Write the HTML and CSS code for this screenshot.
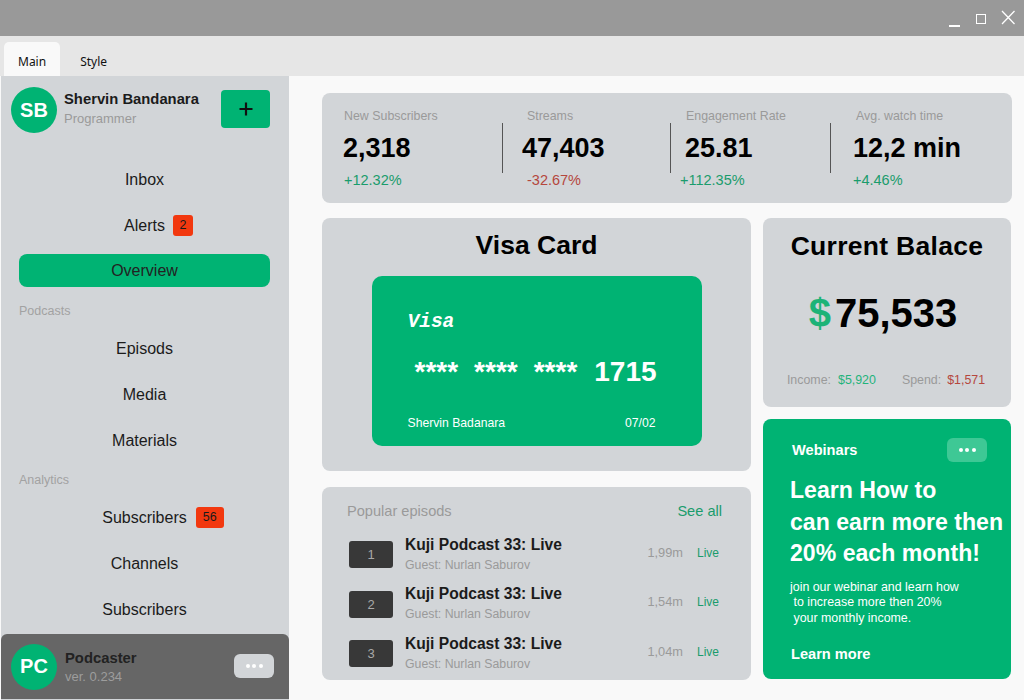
FILE: index.html
```html
<!DOCTYPE html>
<html>
<head>
<meta charset="utf-8">
<title>Podcaster</title>
<link rel="stylesheet" href="styles.css">
</head>
<body>
<div class="window">
  <div class="titlebar">
    <svg class="winctl" width="80" height="36" viewBox="0 0 80 36">
      <rect x="5" y="25" width="11" height="2" fill="#fff"/>
      <rect x="32.5" y="14.5" width="9" height="9" fill="none" stroke="#fff" stroke-width="1"/>
      <path d="M58 11 L70.5 24 M70.5 11 L58 24" stroke="#fff" stroke-width="1.3" fill="none"/>
    </svg>
  </div>
  <div class="tabs">
    <div class="tab active">Main</div>
    <div class="tab">Style</div>
  </div>
  <div class="main">
    <aside class="sidebar">
      <div class="profile">
        <div class="avatar">SB</div>
        <div class="who">
          <div class="who-name">Shervin Bandanara</div>
          <div class="who-role">Programmer</div>
        </div>
        <button class="add-btn" type="button">
          <svg width="16" height="16" viewBox="0 0 16 16"><path d="M8 1.5 V14.5 M1.5 8 H14.5" stroke="#111" stroke-width="2.2"/></svg>
        </button>
      </div>
      <nav class="nav">
        <div class="nav-item"><span class="lbl">Inbox</span></div>
        <div class="nav-item"><span class="lbl">Alerts<span class="badge">2</span></span></div>
        <div class="nav-item active"><span class="lbl">Overview</span></div>
        <div class="nav-section sec-podcasts">Podcasts</div>
        <div class="nav-item first"><span class="lbl">Episods</span></div>
        <div class="nav-item"><span class="lbl">Media</span></div>
        <div class="nav-item"><span class="lbl">Materials</span></div>
        <div class="nav-section sec-analytics">Analytics</div>
        <div class="nav-item first"><span class="lbl">Subscribers<span class="badge wide">56</span></span></div>
        <div class="nav-item"><span class="lbl">Channels</span></div>
        <div class="nav-item"><span class="lbl">Subscribers</span></div>
      </nav>
      <div class="footer">
        <div class="avatar">PC</div>
        <div class="who">
          <div class="who-name dark">Podcaster</div>
          <div class="who-role">ver. 0.234</div>
        </div>
        <button class="more-btn" type="button"><span></span><span></span><span></span></button>
      </div>
    </aside>

    <section class="content">
      <div class="stats card">
        <div class="stat s1">
          <div class="slabel">New Subscribers</div>
          <div class="sval">2,318</div>
          <div class="spct up">+12.32%</div>
        </div>
        <div class="sep"></div>
        <div class="stat s2">
          <div class="slabel">Streams</div>
          <div class="sval">47,403</div>
          <div class="spct down">-32.67%</div>
        </div>
        <div class="sep"></div>
        <div class="stat s3">
          <div class="slabel">Engagement Rate</div>
          <div class="sval">25.81</div>
          <div class="spct up">+112.35%</div>
        </div>
        <div class="sep"></div>
        <div class="stat s4">
          <div class="slabel">Avg. watch time</div>
          <div class="sval">12,2 min</div>
          <div class="spct up">+4.46%</div>
        </div>
      </div>

      <div class="grid">
        <div class="col col-left">
          <div class="card visa">
            <h2 class="panel-title">Visa Card</h2>
            <div class="cc">
              <div class="cc-brand">Visa</div>
              <div class="cc-num"><span>****</span><span>****</span><span>****</span><span class="cc-last">1715</span></div>
              <div class="cc-foot"><span>Shervin Badanara</span><span>07/02</span></div>
            </div>
          </div>

          <div class="card episodes">
            <div class="ep-head">
              <span class="ep-title">Popular episods</span>
              <span class="see-all">See all</span>
            </div>
            <div class="ep-row">
              <div class="ep-num">1</div>
              <div class="ep-text">
                <div class="ep-name">Kuji Podcast 33: Live</div>
                <div class="ep-guest">Guest: Nurlan Saburov</div>
              </div>
              <div class="ep-meta"><span class="ep-len">1,99m</span><span class="ep-live">Live</span></div>
            </div>
            <div class="ep-row">
              <div class="ep-num">2</div>
              <div class="ep-text">
                <div class="ep-name">Kuji Podcast 33: Live</div>
                <div class="ep-guest">Guest: Nurlan Saburov</div>
              </div>
              <div class="ep-meta"><span class="ep-len">1,54m</span><span class="ep-live">Live</span></div>
            </div>
            <div class="ep-row">
              <div class="ep-num">3</div>
              <div class="ep-text">
                <div class="ep-name">Kuji Podcast 33: Live</div>
                <div class="ep-guest">Guest: Nurlan Saburov</div>
              </div>
              <div class="ep-meta"><span class="ep-len">1,04m</span><span class="ep-live">Live</span></div>
            </div>
          </div>
        </div>

        <div class="col col-right">
          <div class="card balance">
            <h2 class="panel-title bal-title">Current Balace</h2>
            <div class="amount"><span class="dollar">$</span><span>75,533</span></div>
            <div class="flow">
              <span class="flow-lbl">Income:</span><span class="flow-in">$5,920</span>
              <span class="flow-lbl spend">Spend:</span><span class="flow-out">$1,571</span>
            </div>
          </div>

          <div class="webinar">
            <div class="web-head">
              <span class="web-title">Webinars</span>
              <button class="web-more" type="button"><span></span><span></span><span></span></button>
            </div>
            <div class="web-headline">Learn How to<br>can earn more then<br>20% each month!</div>
            <div class="web-body">join our webinar and learn how<br>&nbsp;to increase more then 20%<br>&nbsp;your monthly income.</div>
            <div class="web-link">Learn more</div>
          </div>
        </div>
      </div>
    </section>
  </div>
</div>
</body>
</html>
```

FILE: styles.css
```css
* { box-sizing: border-box; }

html, body {
  margin: 0;
  padding: 0;
  width: 1024px;
  height: 700px;
  overflow: hidden;
  font-family: "Liberation Sans", Arial, sans-serif;
  color: #111;
  background: #f9f9f9;
}

.window {
  display: flex;
  flex-direction: column;
  width: 1024px;
  height: 700px;
}

/* title bar */
.titlebar {
  height: 36px;
  background: #999999;
  display: flex;
  justify-content: flex-end;
  flex: none;
}

.winctl { display: block; }

/* tabs */
.tabs {
  height: 40px;
  background: #e6e6e6;
  display: flex;
  align-items: flex-end;
  gap: 6px;
  padding-left: 4px;
  flex: none;
}

.tab {
  height: 34px;
  padding: 4px 14px 0;
  display: flex;
  align-items: center;
  font-family: "Noto Sans", sans-serif;
  font-size: 12px;
  color: #111;
  border-radius: 5px 5px 0 0;
}

.tab.active { background: #f9f9f9; }

/* main */
.main {
  flex: 1;
  display: flex;
  padding-left: 1px;
  min-height: 0;
}

/* sidebar */
.sidebar {
  width: 288px;
  background: #d2d5d8;
  display: flex;
  flex-direction: column;
  flex: none;
}

.profile {
  display: flex;
  align-items: flex-start;
  padding: 11px 19px 0 10px;
  height: 81px;
}

.avatar {
  width: 46px;
  height: 46px;
  border-radius: 50%;
  background: #00b373;
  color: #fff;
  font-weight: bold;
  font-size: 20px;
  display: flex;
  align-items: center;
  justify-content: center;
  flex: none;
}

.who {
  margin-left: 7px;
  flex: 1;
  padding-top: 3px;
}

.who-name {
  font-size: 14.8px;
  font-weight: bold;
  color: #1b1b1b;
  line-height: 19px;
}

.who-name.dark { color: #222; }

.who-role {
  font-size: 13px;
  color: #9a9a9a;
  line-height: 18px;
  margin-top: 1px;
}

.add-btn {
  width: 49px;
  height: 38px;
  margin-top: 3px;
  border: none;
  border-radius: 4px;
  background: #00b373;
  display: flex;
  align-items: center;
  justify-content: center;
  padding: 0;
}

.add-btn svg { display: block; }

.nav {
  display: flex;
  flex-direction: column;
  padding: 0 19px 0 18px;
}

.nav-item {
  height: 46px;
  display: flex;
  align-items: center;
  justify-content: center;
  font-size: 16px;
  color: #1b1b1b;
}

.nav-item.first { margin-top: 7px; }

.nav-item.active {
  height: 33px;
  margin-top: 5px;
  background: #00b373;
  border-radius: 8px;
  color: #222;
}

.lbl {
  position: relative;
  line-height: 20px;
}

.badge {
  position: absolute;
  left: calc(100% + 8px);
  top: -1px;
  width: 20px;
  height: 21px;
  background: #f2380f;
  color: #1a1a1a;
  border-radius: 3px;
  font-size: 12.5px;
  line-height: 21px;
  text-align: center;
}

.badge.wide { width: 28px; left: calc(100% + 9px); }

.nav-section {
  font-size: 12.5px;
  color: #a2a2a2;
  line-height: 16px;
}

.sec-podcasts { margin-top: 16px; }
.sec-analytics { margin-top: 8px; }

.footer {
  margin-top: auto;
  height: 65px;
  margin-bottom: 1px;
  background: #666666;
  border-radius: 6px 6px 0 0;
  display: flex;
  align-items: center;
  padding: 0 15px 0 10px;
}

.footer .who { padding-top: 0; margin-left: 8px; }
.footer .who-name { line-height: 20px; }
.footer .who-role { color: #9d9d9d; margin-top: 0; }

.more-btn {
  width: 40px;
  height: 24px;
  border: none;
  padding: 0;
  border-radius: 6px;
  background: #d2d5d8;
  display: flex;
  align-items: center;
  justify-content: center;
  gap: 2.5px;
  margin-top: -2px;
}

.more-btn span, .web-more span {
  width: 4px;
  height: 4px;
  border-radius: 50%;
  background: #fff;
  display: block;
}

/* content */
.content {
  flex: 1;
  padding: 17px 12px 0 33px;
  display: flex;
  flex-direction: column;
}

.card {
  background: #d2d5d8;
  border-radius: 8px;
}

.stats {
  height: 110px;
  display: flex;
  align-items: center;
}

.stat {
  height: 110px;
  padding-top: 15px;
}

.s1 { width: 180px; padding-left: 22px; }
.s2 { width: 167px; padding-left: 24px; }
.s3 { width: 159px; padding-left: 15px; }
.s4 { flex: 1; padding-left: 25px; }

.sep {
  width: 1px;
  height: 50px;
  background: #555;
  flex: none;
}

.slabel {
  font-size: 12.4px;
  line-height: 16px;
  color: #9a9a9a;
}

.sval {
  margin-top: 8px;
  font-size: 27px;
  font-weight: bold;
  line-height: 32px;
  color: #000;
  margin-left: -1px;
}

.s2 .sval { margin-left: -5px; }
.s4 .sval { margin-left: -3px; }

.spct {
  margin-top: 7px;
  font-size: 14.5px;
  line-height: 18px;
}

.s3 .spct { margin-left: -6px; }
.s4 .spct { margin-left: -3px; }

.up { color: #1a9c6c; }
.down { color: #b5473d; }

.grid {
  margin-top: 15px;
  display: flex;
  gap: 12px;
}

.col {
  display: flex;
  flex-direction: column;
}

.col-left { width: 429px; gap: 16px; }
.col-right { width: 248px; gap: 12px; }

.panel-title {
  margin: 0;
  font-size: 26.5px;
  font-weight: bold;
  line-height: 32px;
  text-align: center;
  color: #000;
}

.visa {
  height: 253px;
  padding-top: 11px;
  display: flex;
  flex-direction: column;
  align-items: center;
}

.cc {
  margin-top: 15px;
  width: 330px;
  height: 170px;
  background: #00b373;
  border-radius: 10px;
  padding: 34px 46px 0 36px;
  color: #fff;
}

.cc-brand {
  font-family: "Liberation Mono", "Courier New", monospace;
  font-style: italic;
  font-weight: bold;
  font-size: 19.5px;
  line-height: 24px;
}

.cc-num {
  margin-top: 22px;
  display: flex;
  align-items: baseline;
  gap: 16px;
  font-weight: bold;
  font-size: 28px;
  line-height: 32px;
  padding-left: 7px;
}

.cc-num .cc-last { margin-left: 1px; }

.cc-foot {
  margin-top: 27px;
  display: flex;
  justify-content: space-between;
  font-size: 12.2px;
  line-height: 16px;
}

.episodes {
  height: 193px;
  padding: 14px 32px 0 25px;
}

.ep-head {
  display: flex;
  justify-content: space-between;
  align-items: center;
  line-height: 20px;
  font-size: 14.6px;
  margin-bottom: 13px;
}

.ep-title { color: #9a9a9a; }
.see-all { color: #1a9c6c; margin-right: -3px; }

.ep-row {
  height: 39px;
  display: flex;
  align-items: center;
  margin-bottom: 10.5px;
}

.ep-num {
  width: 44px;
  height: 27px;
  margin-left: 2px;
  margin-top: 2px;
  border-radius: 3px;
  background: #383838;
  color: #a8a8a8;
  font-size: 13px;
  display: flex;
  align-items: center;
  justify-content: center;
}

.ep-text {
  margin-left: 12px;
  flex: 1;
}

.ep-name {
  font-size: 15.6px;
  font-weight: bold;
  line-height: 20px;
  color: #1b1b1b;
}

.ep-guest {
  margin-top: 2px;
  font-size: 12.3px;
  line-height: 16px;
  color: #9a9a9a;
}

.ep-meta {
  display: flex;
  gap: 14px;
  font-size: 12.8px;
  line-height: 16px;
  margin-top: -2px;
}

.ep-len { color: #9a9a9a; }
.ep-live { color: #1a9c6c; font-size: 12px; }

.balance {
  height: 189px;
  padding-top: 12px;
  display: flex;
  flex-direction: column;
  align-items: center;
}

.bal-title { letter-spacing: 0.3px; }

.amount {
  margin-top: 28px;
  display: flex;
  align-items: baseline;
  gap: 4px;
  font-size: 40px;
  font-weight: bold;
  line-height: 46px;
  color: #000;
  margin-left: -8px;
}

.dollar { color: #1db377; }

.flow {
  margin-top: 36px;
  font-size: 12.4px;
  line-height: 16px;
  display: flex;
  margin-left: -2px;
}

.flow-lbl { color: #9a9a9a; }
.flow-in { color: #1fb37b; margin-left: 7px; }
.flow-lbl.spend { margin-left: 26px; }
.flow-out { color: #b5473d; margin-left: 6px; }

.webinar {
  height: 260px;
  background: #00b373;
  border-radius: 8px;
  padding: 19px 24px 0 27px;
  color: #fff;
}

.web-head {
  display: flex;
  justify-content: space-between;
  align-items: center;
  height: 24px;
}

.web-title {
  font-size: 14.6px;
  font-weight: bold;
  margin-left: 2px;
}

.web-more {
  width: 40px;
  height: 24px;
  border: none;
  padding: 0;
  border-radius: 6px;
  background: #3ec895;
  display: flex;
  align-items: center;
  justify-content: center;
  gap: 2.5px;
}

.web-headline {
  margin-top: 13px;
  font-size: 23.1px;
  font-weight: bold;
  line-height: 31.5px;
  white-space: nowrap;
}

.web-body {
  margin-top: 10px;
  font-size: 12.4px;
  line-height: 15.5px;
  white-space: nowrap;
}

.web-link {
  margin-top: 19px;
  font-size: 14.6px;
  font-weight: bold;
  line-height: 18px;
  margin-left: 1px;
}
```
